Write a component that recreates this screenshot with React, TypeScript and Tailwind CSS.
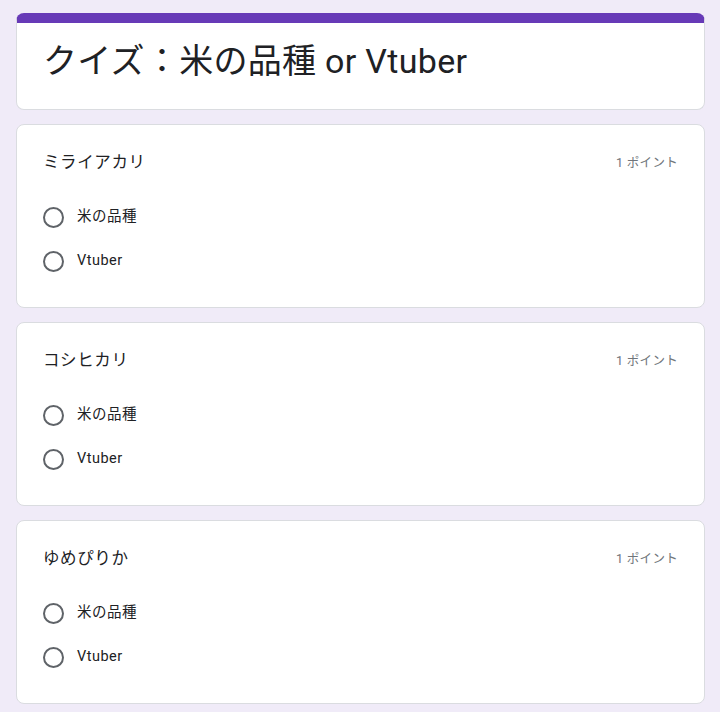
import React from "react";

const questions = ["ミライアカリ", "コシヒカリ", "ゆめぴりか"];
const options = ["米の品種", "Vtuber"];

function Radio() {
  return <div className="w-[21px] h-[21px] rounded-full border-2 border-[#5f6368] shrink-0" />;
}

function QuestionCard({ title }: { title: string }) {
  return (
    <div className="bg-white rounded-lg border border-[#dadce0] h-[184px] pl-[26px] pr-[26px] pt-[26px]">
      <div className="flex items-center justify-between h-[24px]">
        <div className="text-[16.5px] text-[#202124] tracking-[0.6px]">{title}</div>
        <div className="text-[12.5px] text-[#70757a] pt-[1px] tracking-[0.3px]">1 ポイント</div>
      </div>
      <div className="mt-[20px] flex flex-col">
        {options.map((o) => (
          <div key={o} className="flex items-center h-[44px]">
            <Radio />
            <span className="ml-[13px] text-[14.5px] text-[#202124] tracking-[0.5px]">{o}</span>
          </div>
        ))}
      </div>
    </div>
  );
}

export default function App() {
  return (
    <div
      className="min-h-[712px] bg-[#f0ebf8] pl-4 pr-[15px] pt-[13px] pb-[9px]"
      style={{ fontFamily: "Roboto, 'Noto Sans CJK JP', sans-serif" }}
    >
      <div className="flex flex-col gap-[14px]">
        <div className="bg-white rounded-lg border border-[#dadce0] border-t-[10px] border-t-[#673ab7] h-[97px] pl-[26px] pt-[17px]">
          <div className="text-[34px] leading-[42px] text-[#202124] tracking-[0.3px]">クイズ：米の品種 or Vtuber</div>
        </div>
        {questions.map((q) => (
          <QuestionCard key={q} title={q} />
        ))}
      </div>
    </div>
  );
}
